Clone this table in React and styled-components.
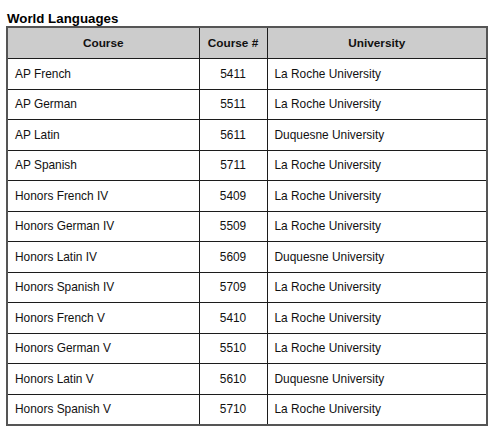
import React from "react";
import styled, { createGlobalStyle } from "styled-components";

const GlobalStyle = createGlobalStyle`
  html, body {
    margin: 0;
    padding: 0;
    background: #fff;
  }
  body {
    font-family: "Liberation Sans", Arial, Helvetica, sans-serif;
    color: #111;
  }
`;

const Page = styled.div`
  padding: 12px 0 0 6px;
  width: 480px;
`;

const Title = styled.div`
  font-size: 13.3px;
  font-weight: bold;
  line-height: 14px;
  padding-left: 1px;
  color: #000;
`;

const Table = styled.table`
  width: 480px;
  border-collapse: collapse;
  table-layout: fixed;
  border: 2px solid #555;
`;

const HeadCell = styled.th`
  height: 30px;
  padding: 0 8px;
  background: #cccccc;
  border: 1px solid #1c1c1c;
  font-size: 11.8px;
  font-weight: bold;
  text-align: center;
  color: #111;
`;

const Cell = styled.td`
  height: 29.5px;
  padding: 0 7px;
  border: 1px solid #1c1c1c;
  font-size: 11.9px;
  text-align: ${(props) => (props.center ? "center" : "left")};
  color: #111;
`;

const courses = [
  ["AP French", "5411", "La Roche University"],
  ["AP German", "5511", "La Roche University"],
  ["AP Latin", "5611", "Duquesne University"],
  ["AP Spanish", "5711", "La Roche University"],
  ["Honors French IV", "5409", "La Roche University"],
  ["Honors German IV", "5509", "La Roche University"],
  ["Honors Latin IV", "5609", "Duquesne University"],
  ["Honors Spanish IV", "5709", "La Roche University"],
  ["Honors French V", "5410", "La Roche University"],
  ["Honors German V", "5510", "La Roche University"],
  ["Honors Latin V", "5610", "Duquesne University"],
  ["Honors Spanish V", "5710", "La Roche University"],
];

function App() {
  return (
    <Page>
      <GlobalStyle />
      <Title>World Languages</Title>
      <Table>
        <colgroup>
          <col style={{ width: 192 }} />
          <col style={{ width: 68 }} />
          <col style={{ width: 220 }} />
        </colgroup>
        <thead>
          <tr>
            <HeadCell>Course</HeadCell>
            <HeadCell>Course #</HeadCell>
            <HeadCell>University</HeadCell>
          </tr>
        </thead>
        <tbody>
          {courses.map(([name, num, uni]) => (
            <tr key={num}>
              <Cell>{name}</Cell>
              <Cell center>{num}</Cell>
              <Cell>{uni}</Cell>
            </tr>
          ))}
        </tbody>
      </Table>
    </Page>
  );
}

export default App;
